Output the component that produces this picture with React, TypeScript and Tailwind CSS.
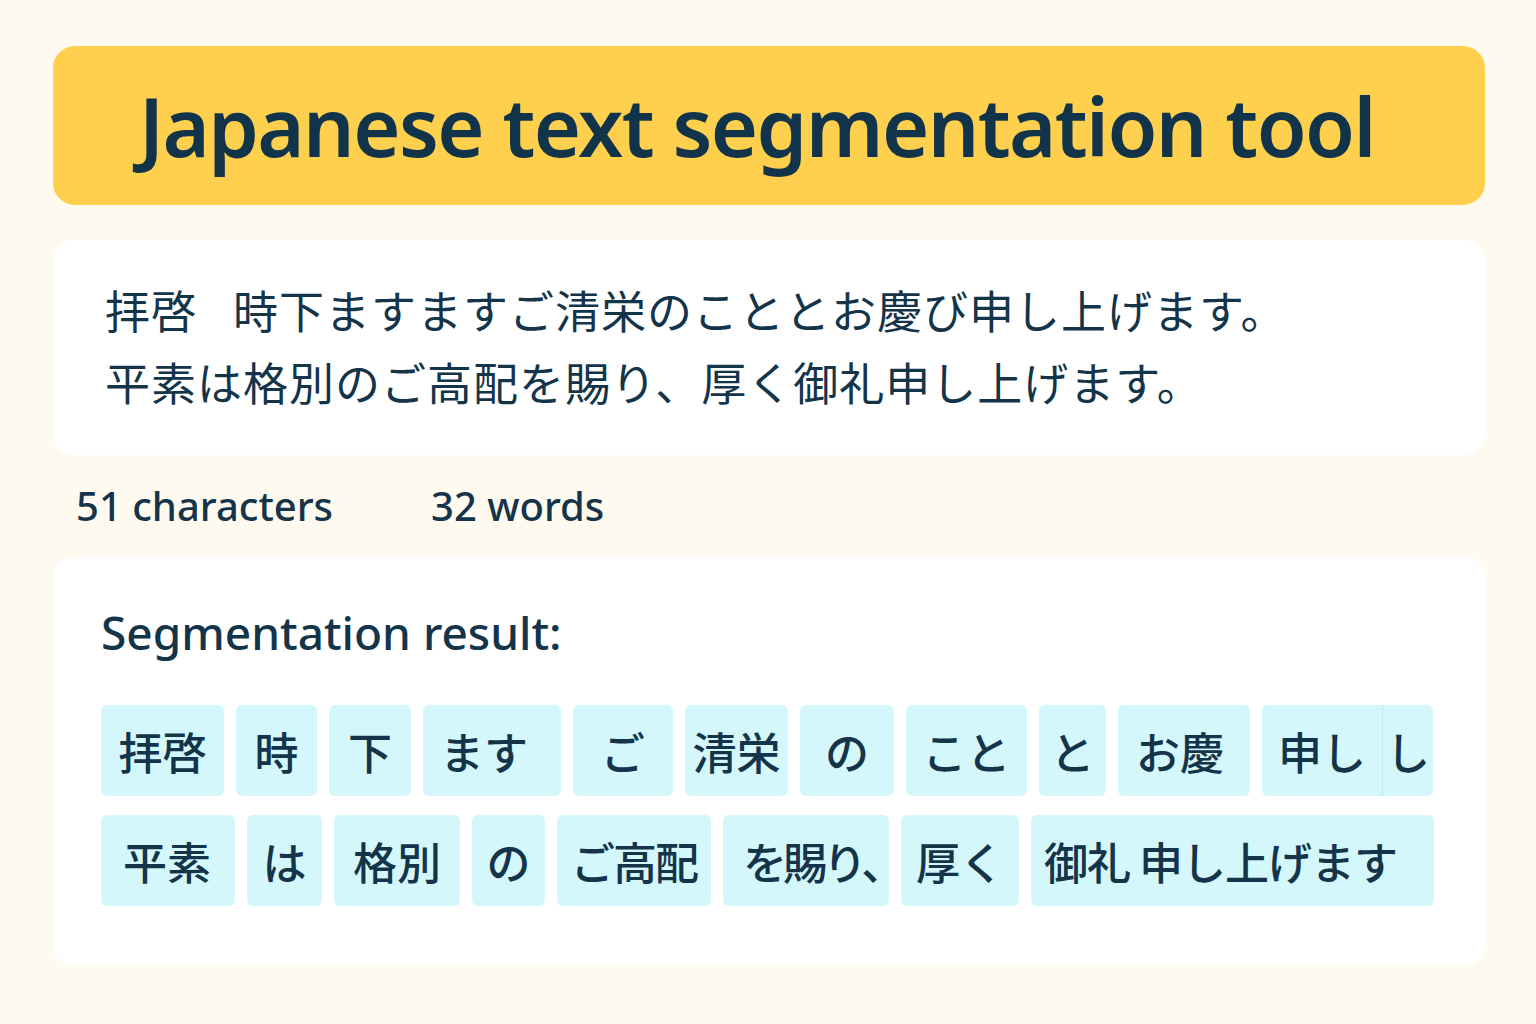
const row1 = [
  { text: '拝啓', w: 'w-[123px]' },
  { text: '時', w: 'w-[81px]' },
  { text: '下', w: 'w-[82px]' },
  { text: 'ます', w: 'w-[138px] justify-start pl-[17px]' },
  { text: 'ご', w: 'w-[100px]' },
  { text: '清栄', w: 'w-[103px]' },
  { text: 'の', w: 'w-[94px]' },
  { text: 'こと', w: 'w-[121px]' },
  { text: 'と', w: 'w-[67px]' },
  { text: 'お慶', w: 'w-[132px] justify-start pl-[18px]' },
];

const row2 = [
  { text: '平素', w: 'w-[134px] justify-start pl-[22px]' },
  { text: 'は', w: 'w-[75px]' },
  { text: '格別', w: 'w-[126px]' },
  { text: 'の', w: 'w-[73px]' },
  { text: 'ご高配', w: 'w-[154px] tracking-[-2px]' },
  { text: 'を賜り、', w: 'w-[166px] justify-start pl-[20px] tracking-[-4px]' },
  { text: '厚く', w: 'w-[118px]' },
  { text: '御礼 申し上げます', w: 'w-[403px] justify-start pl-[13px] tracking-[-1px]' },
];

const jp = 'font-["Noto_Sans_CJK_JP",sans-serif]';

function Chip({ text, w }: { text: string; w: string }) {
  return (
    <div className={`flex h-[91px] shrink-0 items-center justify-center whitespace-nowrap rounded-md bg-[#d4f7fb] text-[44px] font-medium text-[#14344a] ${jp} ${w}`}>
      {text}
    </div>
  );
}

export default function App() {
  return (
    <div className="min-h-[1024px] bg-[#fffaf0] pb-[59px] pl-[53px] pr-[51px] pt-[46px] font-['Noto_Sans',sans-serif] text-[#14344a]">
      <header className="flex h-[159px] items-center rounded-[22px] bg-[#ffd04d] pl-[86px]">
        <h1 className="text-[81px] font-semibold leading-none tracking-[-1.6px] text-[#12344a]">Japanese text segmentation tool</h1>
      </header>

      <section className={`mt-[35px] h-[215px] rounded-[20px] bg-white pl-[52px] pt-[34px] text-[45px] leading-[72px] tracking-[1px] ${jp}`}>
        <p>
          拝啓<span className="inline-block w-[36px]" />時下ますますご清栄のこととお慶び申し上げます。
        </p>
        <p>平素は格別のご高配を賜り、厚く御礼申し上げます。</p>
      </section>

      <div className="flex h-[102px] items-center pl-[23px] text-[40px] font-medium">
        <span className="w-[355px]">51 characters</span>
        <span>32 words</span>
      </div>

      <section className="h-[408px] rounded-[20px] bg-white pl-[48px] pt-[46px]">
        <h2 className="text-[46px] font-medium leading-[58px]">Segmentation result:</h2>
        <div className="mt-[44px] flex flex-col gap-[19px]">
          <div className="flex gap-[12px]">
            {row1.map((c) => (
              <Chip key={c.text} text={c.text} w={c.w} />
            ))}
            <div className="flex">
              <div className={`flex h-[91px] w-[120px] items-center justify-center rounded-l-md bg-[#d4f7fb] text-[44px] font-medium ${jp}`}>申し</div>
              <div className={`flex h-[91px] w-[51px] items-center justify-center rounded-r-md border-l border-[#bfe9ee] bg-[#d4f7fb] text-[44px] font-medium ${jp}`}>し</div>
            </div>
          </div>
          <div className="flex gap-[12px]">
            {row2.map((c) => (
              <Chip key={c.text} text={c.text} w={c.w} />
            ))}
          </div>
        </div>
      </section>
    </div>
  );
}
